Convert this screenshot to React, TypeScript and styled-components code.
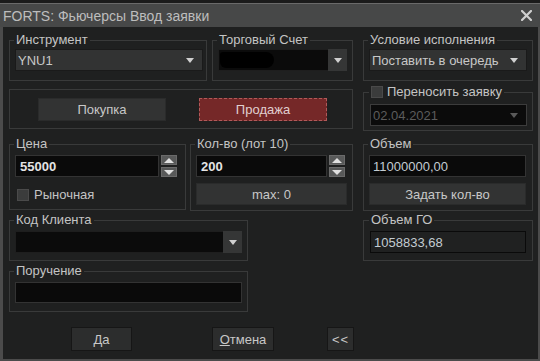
import React from "react";
import styled, { createGlobalStyle } from "styled-components";

const Global = createGlobalStyle`
  html, body { margin: 0; padding: 0; background: #161616; }
  body { font-family: "Liberation Sans", Arial, sans-serif; }
  #root { width: 540px; height: 361px; }
  * { box-sizing: border-box; }
`;

const Screen = styled.div`
  width: 540px;
  height: 361px;
  display: flex;
  flex-direction: column;
  background: #161616;
  overflow: hidden;
`;

const TopStrip = styled.div`
  flex: none;
  height: 3px;
  background: #1b1b1b;
`;

const Window = styled.div`
  flex: 1;
  display: flex;
  flex-direction: column;
  border-left: 3px solid #4b4b4b;
  border-right: 2px solid #4b4b4b;
  border-bottom: 2px solid #4b4b4b;
  background: #1f2020;
`;

const TitleBar = styled.div`
  flex: none;
  height: 24px;
  margin: 0 -2px 0 -3px;
  padding: 0 8px 0 3px;
  border-top: 1px solid #6a6a6a;
  background: #474848;
  display: flex;
  align-items: center;
  justify-content: space-between;
  color: #bdbdbd;
  font-size: 14px;
`;

const Body = styled.div`
  flex: 1;
  padding: 6px 5px 0 6px;
  display: flex;
  flex-direction: column;
`;

const Grid = styled.div`
  display: grid;
  grid-template-columns: 344px 170px;
  column-gap: 10px;
  row-gap: 4px;
  align-items: start;
`;

const Row = styled.div<{ $gap?: number; $mt?: number }>`
  display: flex;
  gap: ${(p) => p.$gap ?? 5}px;
  align-items: start;
  margin-top: ${(p) => p.$mt ?? 0}px;
`;

const Group = styled.fieldset<{ $w?: number; $pad?: string; $mt?: number }>`
  margin: ${(p) => p.$mt ?? 0}px 0 0 0;
  min-width: 0;
  width: ${(p) => (p.$w ? `${p.$w}px` : "auto")};
  border: 1px solid #393a3a;
  padding: ${(p) => p.$pad ?? "2px 4px 7px 5px"};
`;

const Legend = styled.legend`
  margin-left: -1px;
  padding: 0 2px;
  font-size: 13px;
  line-height: 14px;
  color: #c4c4c4;
  display: flex;
  align-items: center;
  gap: 4px;
`;

const Select = styled.div<{ $w?: number; $tone: "gray" | "black" | "muted" }>`
  height: 22px;
  width: ${(p) => (p.$w ? `${p.$w}px` : "100%")};
  display: flex;
  align-items: center;
  background: ${(p) => (p.$tone === "gray" ? "#323333" : "#0b0b0b")};
  border: 1px solid ${(p) => (p.$tone === "gray" ? "#1a1a1a" : p.$tone === "muted" ? "#3c3c3c" : "#1e1e1e")};
  color: ${(p) => (p.$tone === "muted" ? "#5c5c5c" : "#c8c8c8")};
  font-size: 13px;
  padding-left: 2px;
  position: relative;
`;

const SelectText = styled.span`
  flex: 1;
  white-space: nowrap;
`;

const ArrowBox = styled.span<{ $btn?: boolean; $dim?: boolean }>`
  flex: none;
  width: ${(p) => (p.$btn ? 19 : 24)}px;
  align-self: stretch;
  display: flex;
  align-items: center;
  justify-content: center;
  background: ${(p) => (p.$btn ? "#353636" : "transparent")};
  margin: ${(p) => (p.$btn ? "-1px -1px -1px 0" : "0")};
  &::after {
    content: "";
    border-left: 4.5px solid transparent;
    border-right: 4.5px solid transparent;
    border-top: 5px solid ${(p) => (p.$dim ? "#5a5a5a" : "#d0d0d0")};
  }
`;

const Redacted = styled.span`
  position: absolute;
  left: 1px;
  top: 2px;
  width: 54px;
  height: 16px;
  background: #000;
  border-radius: 3px 8px 8px 6px;
`;

const Btn = styled.button<{ $w?: number; $h?: number; $danger?: boolean }>`
  width: ${(p) => (p.$w ? `${p.$w}px` : "100%")};
  height: ${(p) => p.$h ?? 23}px;
  padding: 0;
  font-family: inherit;
  font-size: 13px;
  color: ${(p) => (p.$danger ? "#e0d0d0" : "#c8c8c8")};
  background: ${(p) => (p.$danger ? "#752828" : "#323333")};
  border: 1px ${(p) => (p.$danger ? "dashed #b05a5a" : "solid #2a2b2b")};
  cursor: pointer;
`;

const ButtonsBox = styled.div`
  display: flex;
  padding-left: 28px;
  gap: 33px;
`;

const Input = styled.div<{ $w?: number; $h?: number; $tone?: "black" | "frame" }>`
  height: ${(p) => p.$h ?? 22}px;
  width: ${(p) => (p.$w ? `${p.$w}px` : "100%")};
  display: flex;
  align-items: center;
  padding-left: 3px;
  background: ${(p) => (p.$tone === "frame" ? "#202121" : "#0a0a0a")};
  border: 1px solid ${(p) => (p.$tone === "frame" ? "#0a0a0a" : "#333")};
  font-size: 13px;
  color: #c3ccd2;
`;

const Strong = styled.span`
  font-weight: bold;
  color: #e4e4e4;
  padding-left: 1px;
`;

const SpinCol = styled.div`
  display: flex;
  flex-direction: column;
  gap: 2px;
`;

const SpinBtn = styled.div<{ $up?: boolean }>`
  width: 16px;
  height: 10px;
  background: #585959;
  border: 1px solid #6a6a6a;
  display: flex;
  align-items: center;
  justify-content: center;
  &::after {
    content: "";
    border-left: 5px solid transparent;
    border-right: 5px solid transparent;
    ${(p) => (p.$up ? "border-bottom: 5px solid #e0e0e0;" : "border-top: 5px solid #e0e0e0;")}
  }
`;

const Check = styled.span`
  width: 12px;
  height: 12px;
  flex: none;
  background: #3b3c3c;
  border: 1px solid #4a4a4a;
`;

const CheckRow = styled.label`
  display: flex;
  align-items: center;
  gap: 5px;
  height: 12px;
  margin: 12px 0 0 2px;
  font-size: 13px;
  line-height: 12px;
  color: #c4c4c4;
`;

const Stack = styled.div<{ $gap?: number }>`
  display: flex;
  flex-direction: column;
  gap: ${(p) => p.$gap ?? 6}px;
`;

const Footer = styled.div`
  display: flex;
  margin-top: 15px;
  padding-left: 62px;
`;

const FootBtn = styled.button<{ $w: number; $ml?: number }>`
  width: ${(p) => p.$w}px;
  height: 24px;
  margin-left: ${(p) => p.$ml ?? 0}px;
  padding: 0;
  font-family: inherit;
  font-size: 13px;
  color: #c8c8c8;
  background: #2c2d2d;
  border: 1px solid #161616;
  letter-spacing: ${(p) => (p.$w < 30 ? "1px" : "0")};
`;

const CloseIcon = () => (
  <svg width="11" height="11" viewBox="0 0 11 11">
    <path d="M1 1 L10 10 M10 1 L1 10" stroke="#cfcfcf" strokeWidth="2.2" strokeLinecap="square" />
  </svg>
);

export default function App() {
  return (
    <Screen>
      <Global />
      <TopStrip />
      <Window>
        <TitleBar>
          <span>FORTS: Фьючерсы Ввод заявки</span>
          <CloseIcon />
        </TitleBar>
        <Body>
          <Grid>
            <Row>
              <Group $w={198} $pad="2px 4px 9px 5px">
                <Legend>Инструмент</Legend>
                <Select $tone="gray" $w={188}>
                  <SelectText>YNU1</SelectText>
                  <ArrowBox />
                </Select>
              </Group>
              <Group $w={141} $pad="2px 4px 9px 5px">
                <Legend>Торговый Счет</Legend>
                <Select $tone="black" $w={129}>
                  <Redacted />
                  <SelectText />
                  <ArrowBox $btn />
                </Select>
              </Group>
            </Row>
            <Group $pad="2px 5px 9px 5px">
              <Legend>Условие исполнения</Legend>
              <Select $tone="gray">
                <SelectText>Поставить в очередь</SelectText>
                <ArrowBox />
              </Select>
            </Group>

            <Group $mt={4} $pad="8px 0 7px 0">
              <ButtonsBox>
                <Btn $w={128}>Покупка</Btn>
                <Btn $w={128} $danger>Продажа</Btn>
              </ButtonsBox>
            </Group>
            <Group $pad="5px 5px 4px 6px">
              <Legend>
                <Check />
                Переносить заявку
              </Legend>
              <Select $tone="muted">
                <SelectText>02.04.2021</SelectText>
                <ArrowBox $dim />
              </Select>
            </Group>

            <Row $gap={4} $mt={2}>
              <Group $w={177} $pad="4px 8px 8px 5px">
                <Legend>Цена</Legend>
                <Row $gap={2}>
                  <Input $w={146}>
                    <Strong>55000</Strong>
                  </Input>
                  <SpinCol>
                    <SpinBtn $up />
                    <SpinBtn />
                  </SpinCol>
                </Row>
                <CheckRow>
                  <Check />
                  Рыночная
                </CheckRow>
              </Group>
              <Group $w={163} $pad="4px 5px 5px 5px">
                <Legend>Кол-во (лот 10)</Legend>
                <Stack>
                  <Row $gap={2}>
                    <Input $w={131}>
                      <Strong>200</Strong>
                    </Input>
                    <SpinCol>
                      <SpinBtn $up />
                      <SpinBtn />
                    </SpinCol>
                  </Row>
                  <Btn $w={151} $h={22}>max: 0</Btn>
                </Stack>
              </Group>
            </Row>
            <Group $mt={2} $pad="4px 6px 5px 5px">
              <Legend>Объем</Legend>
              <Stack>
                <Input>11000000,00</Input>
                <Btn $h={22}>Задать кол-во</Btn>
              </Stack>
            </Group>

            <Group $w={239} $mt={-2} $pad="4px 5px 7px 5px">
              <Legend>Код Клиента</Legend>
              <Select $tone="black">
                <SelectText />
                <ArrowBox $btn />
              </Select>
            </Group>
            <Group $mt={-2} $pad="4px 6px 7px 6px">
              <Legend>Объем ГО</Legend>
              <Input $tone="frame">1058833,68</Input>
            </Group>

            <Group $w={239} $mt={-1} $pad="4px 5px 8px 5px">
              <Legend>Поручение</Legend>
              <Input $h={21} />
            </Group>
          </Grid>
          <Footer>
            <FootBtn $w={61}>
              <u>Д</u>а
            </FootBtn>
            <FootBtn $w={62} $ml={80}>
              <u>О</u>тмена
            </FootBtn>
            <FootBtn $w={27} $ml={53}>
              &lt;&lt;
            </FootBtn>
          </Footer>
        </Body>
      </Window>
    </Screen>
  );
}
